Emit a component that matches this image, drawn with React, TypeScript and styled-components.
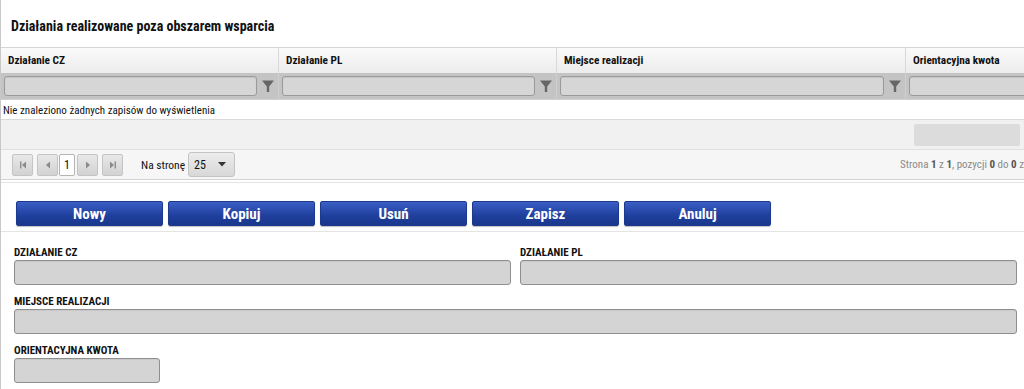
import styled, { createGlobalStyle } from 'styled-components';

const GlobalStyle = createGlobalStyle`
  html, body {
    margin: 0;
    padding: 0;
    background: #fff;
  }
  body {
    font-family: "Roboto Condensed", "Liberation Sans Narrow", "DejaVu Sans Condensed", sans-serif;
    color: #111;
  }
  * { box-sizing: border-box; }
`;

const ScPage = styled.div`
  width: 1024px;
  height: 389px;
  overflow: hidden;
  border-left: 1px solid #c8c8c8;
`;

const ScTitle = styled.h2`
  margin: 0;
  height: 47px;
  padding: 18px 0 0 10px;
  font-size: 14px;
  font-weight: bold;
`;

const ScGrid = styled.div`
  overflow: hidden;
  width: 100%;
`;

const ScRow = styled.div`
  display: grid;
  grid-template-columns: 278px 278px 349px 200px;
  width: 1105px;
`;

const ScHeadRow = styled(ScRow)`
  height: 26px;
  border-top: 1px solid #d4d4d4;
  background: linear-gradient(#fafafa, #ececec);
`;

const ScHeadCell = styled.div`
  display: flex;
  align-items: center;
  padding-left: 7px;
  font-size: 11.3px;
  font-weight: bold;
  border-right: 1px solid #d8d8d8;
`;

const ScFilterRow = styled(ScRow)`
  height: 27px;
  background: #c4c4c4;
  border-bottom: 1px solid #d0d0d0;
`;

const ScFilterCell = styled.div`
  display: flex;
  align-items: center;
  padding: 0 3px 0 3px;
  gap: 4px;
  border-right: 1px solid #cfcfcf;
`;

const ScFilterInput = styled.div`
  flex: 1;
  height: 20px;
  background: #d6d6d6;
  border: 1px solid #9a9a9a;
  border-radius: 3px;
  box-shadow: inset 0 1px 1px rgba(0, 0, 0, 0.08);
`;

const ScFunnel = styled.svg`
  width: 14px;
  height: 14px;
  flex: none;
`;

const ScEmpty = styled.div`
  height: 20px;
  display: flex;
  align-items: center;
  padding: 2px 0 0 2px;
  font-size: 11px;
  border-bottom: 1px solid #dadada;
`;

const ScScrollBar = styled.div`
  height: 30px;
  background: #f1f1f1;
  border-bottom: 1px solid #e0e0e0;
  display: flex;
  justify-content: flex-end;
  align-items: center;
  padding-right: 4px;
`;

const ScScrollThumb = styled.div`
  width: 106px;
  height: 22px;
  background: #dcdcdc;
  border-radius: 2px;
`;

const ScPager = styled.div`
  height: 30px;
  display: flex;
  align-items: center;
  padding-left: 11px;
  background: #f6f6f6;
  border-bottom: 1px solid #d4d4d4;
  font-size: 11px;
`;

const ScPagerBtn = styled.div<{ $gap?: number }>`
  width: 21px;
  height: 22px;
  margin-right: ${p => p.$gap ?? 3}px;
  border: 1px solid #c4c4c4;
  border-radius: 2px;
  background: linear-gradient(#e8e8e8, #d2d2d2);
  display: flex;
  align-items: center;
  justify-content: center;
`;

const ScPageInput = styled.div`
  width: 16px;
  height: 22px;
  margin-right: 2px;
  margin-left: -2px;
  border: 1px solid #b4b4b4;
  border-radius: 2px;
  background: #fff;
  display: flex;
  align-items: center;
  justify-content: center;
  font-size: 12px;
`;

const ScPerPageLabel = styled.span`
  margin-left: 15px;
  margin-right: 3px;
  font-size: 11.5px;
`;

const ScSelect = styled.div`
  width: 47px;
  height: 25px;
  border: 1px solid #c4c4c4;
  border-radius: 3px;
  background: linear-gradient(#ececec, #d8d8d8);
  display: flex;
  align-items: center;
  justify-content: space-between;
  padding: 0 8px 0 5px;
  font-size: 12px;
`;

const ScPagerInfo = styled.span`
  margin-left: auto;
  margin-right: 0;
  color: #8a8a8a;
  font-size: 11px;
  white-space: nowrap;
  b {
    color: #555;
    font-weight: bold;
  }
`;

const ScToolbar = styled.div`
  display: flex;
  gap: 5px;
  padding: 18px 0 5px 15px;
  border-top: 1px solid #e4e4e4;
  margin-top: 2px;
  border-bottom: 1px solid #e4e4e4;
`;

const ScButton = styled.button`
  width: 147px;
  height: 25px;
  padding: 0;
  border: 1px solid #1b3a8e;
  border-radius: 2px;
  background: linear-gradient(#3a5ec4, #1f3f9d 60%, #1a378c);
  color: #fff;
  font-family: inherit;
  font-size: 15px;
  font-weight: bold;
  box-shadow: 0 1px 1px rgba(0, 0, 0, 0.25);
`;

const ScForm = styled.div`
  display: grid;
  grid-template-columns: 497px 497px;
  column-gap: 9px;
  padding: 16px 0 0 13px;
`;

const ScField = styled.div<{ $wide?: boolean }>`
  grid-column: ${p => (p.$wide ? '1 / span 2' : 'auto')};
  display: flex;
  flex-direction: column;
  margin-bottom: 12px;
`;

const ScLabel = styled.label`
  font-size: 11px;
  font-weight: bold;
  text-transform: uppercase;
  margin-bottom: 2px;
  height: 10px;
  line-height: 10px;
`;

const ScInput = styled.div<{ $width?: number }>`
  height: 25px;
  width: ${p => (p.$width ? `${p.$width}px` : '100%')};
  background: #d4d4d4;
  border: 1px solid #8f8f8f;
  border-radius: 3px;
  box-shadow: inset 0 1px 1px rgba(0, 0, 0, 0.06);
`;

function Funnel() {
  return (
    <ScFunnel viewBox="0 0 14 14">
      <path d="M1 1.5 H13 L8.2 7.5 V13 H5.8 V7.5 Z" fill="#666" />
    </ScFunnel>
  );
}

type Arrow = 'first' | 'prev' | 'next' | 'last';

function PagerIcon({ kind }: { kind: Arrow }) {
  const c = '#8a8a8a';
  return (
    <svg width="10" height="10" viewBox="0 0 10 10">
      {kind === 'first' && (
        <>
          <rect x="2" y="1.5" width="1.4" height="7" fill={c} />
          <path d="M8 1.5 V8.5 L4 5 Z" fill={c} />
        </>
      )}
      {kind === 'prev' && <path d="M7 1.5 V8.5 L3 5 Z" fill={c} />}
      {kind === 'next' && <path d="M3 1.5 V8.5 L7 5 Z" fill={c} />}
      {kind === 'last' && (
        <>
          <path d="M2 1.5 V8.5 L6 5 Z" fill={c} />
          <rect x="6.6" y="1.5" width="1.4" height="7" fill={c} />
        </>
      )}
    </svg>
  );
}

const columns = ['Działanie CZ', 'Działanie PL', 'Miejsce realizacji', 'Orientacyjna kwota'];
const buttons = ['Nowy', 'Kopiuj', 'Usuń', 'Zapisz', 'Anuluj'];

function App() {
  return (
    <ScPage>
      <GlobalStyle />
      <ScTitle>{'Działania realizowane poza obszarem wsparcia'}</ScTitle>
      <ScGrid>
        <ScHeadRow>
          {columns.map(c => (
            <ScHeadCell key={c}>{c}</ScHeadCell>
          ))}
        </ScHeadRow>
        <ScFilterRow>
          {columns.map((c, i) => (
            <ScFilterCell key={c}>
              <ScFilterInput />
              {i < 3 && <Funnel />}
            </ScFilterCell>
          ))}
        </ScFilterRow>
      </ScGrid>
      <ScEmpty>{'Nie znaleziono żadnych zapisów do wyświetlenia'}</ScEmpty>
      <ScScrollBar>
        <ScScrollThumb />
      </ScScrollBar>
      <ScPager>
        <ScPagerBtn $gap={4}><PagerIcon kind="first" /></ScPagerBtn>
        <ScPagerBtn><PagerIcon kind="prev" /></ScPagerBtn>
        <ScPageInput>1</ScPageInput>
        <ScPagerBtn $gap={4}><PagerIcon kind="next" /></ScPagerBtn>
        <ScPagerBtn><PagerIcon kind="last" /></ScPagerBtn>
        <ScPerPageLabel>{'Na stronę'}</ScPerPageLabel>
        <ScSelect>
          <span>25</span>
          <svg width="8" height="5" viewBox="0 0 8 5">
            <path d="M0 0 H8 L4 4.5 Z" fill="#333" />
          </svg>
        </ScSelect>
        <ScPagerInfo>
          Strona <b>1</b> z <b>1</b>, pozycji <b>0</b> do <b>0</b> z
        </ScPagerInfo>
      </ScPager>
      <ScToolbar>
        {buttons.map(b => (
          <ScButton key={b}>{b}</ScButton>
        ))}
      </ScToolbar>
      <ScForm>
        <ScField>
          <ScLabel>{'Działanie CZ'}</ScLabel>
          <ScInput />
        </ScField>
        <ScField>
          <ScLabel>{'Działanie PL'}</ScLabel>
          <ScInput />
        </ScField>
        <ScField $wide>
          <ScLabel>{'Miejsce realizacji'}</ScLabel>
          <ScInput />
        </ScField>
        <ScField>
          <ScLabel>{'Orientacyjna kwota'}</ScLabel>
          <ScInput $width={146} />
        </ScField>
      </ScForm>
    </ScPage>
  );
}

export default App;
